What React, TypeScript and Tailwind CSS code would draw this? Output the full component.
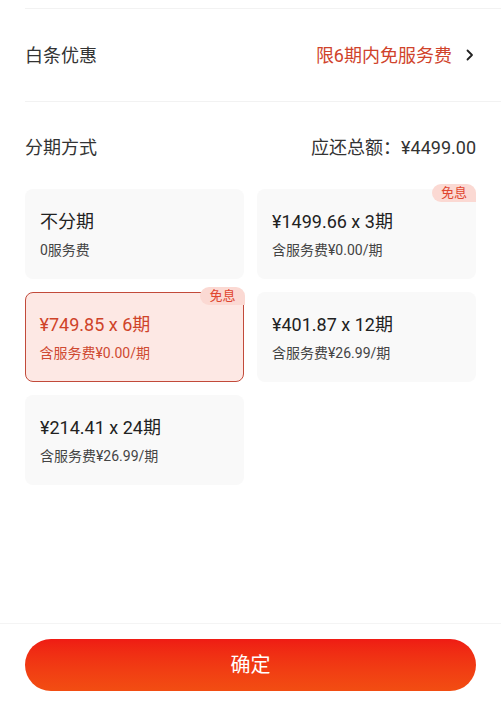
import React from 'react';

const FONT = { fontFamily: 'Roboto, "Noto Sans CJK SC", sans-serif' };

type Plan = { title: string; sub: string; free?: boolean; selected?: boolean };

const PLANS: Plan[] = [
  { title: '不分期', sub: '0服务费' },
  { title: '¥1499.66 x 3期', sub: '含服务费¥0.00/期', free: true },
  { title: '¥749.85 x 6期', sub: '含服务费¥0.00/期', free: true, selected: true },
  { title: '¥401.87 x 12期', sub: '含服务费¥26.99/期' },
  { title: '¥214.41 x 24期', sub: '含服务费¥26.99/期' },
];

const PlanCard = ({ plan }: { plan: Plan }) => (
  <div
    className={
      plan.selected
        ? 'relative h-[90px] rounded-[8px] border-[1.5px] border-[#c24a3a] bg-[#fde8e4] pl-[13.5px] pt-[19.5px]'
        : 'relative h-[90px] rounded-[8px] bg-[#f9f9f9] pl-[15px] pt-[21px]'
    }
  >
    {plan.free && (
      <div
        className={
          plan.selected
            ? 'absolute -top-[6.5px] -right-[1.5px] h-[18px] px-[9px] rounded-t-[9px] rounded-bl-[9px] bg-[#fbd9d3] text-[13px] leading-[18px] text-[#e0462f]'
            : 'absolute -top-[5px] right-0 h-[18px] px-[9px] rounded-t-[9px] rounded-bl-[9px] bg-[#fbd9d3] text-[13px] leading-[18px] text-[#e0462f]'
        }
      >
        免息
      </div>
    )}
    <div className={plan.selected ? 'text-[18px] leading-[24px] text-[#cf4329]' : 'text-[18px] leading-[24px] text-[#222]'}>
      {plan.title}
    </div>
    <div className={plan.selected ? 'mt-[6px] text-[14px] leading-[20px] text-[#cf4a32]' : 'mt-[6px] text-[14px] leading-[20px] text-[#444]'}>
      {plan.sub}
    </div>
  </div>
);

export default function App() {
  return (
    <div className="h-[707px] w-full bg-white flex flex-col" style={FONT}>
      <div className="pt-[8px]">
        <div className="ml-[25px] border-t border-[#f2f2f2]" />
        <div className="h-[92px] flex items-center justify-between pl-[25px] pr-[25px]">
          <span className="text-[18px] text-[#333]">白条优惠</span>
          <div className="flex items-center gap-[12px]">
            <span className="text-[18px] text-[#d0432b]">限6期内免服务费</span>
            <svg width="12" height="12" viewBox="0 0 12 12" fill="none">
              <path d="M3.5 1.5 L8 6 L3.5 10.5" stroke="#222" strokeWidth="1.8" strokeLinecap="round" strokeLinejoin="round" />
            </svg>
          </div>
        </div>
        <div className="ml-[25px] border-t border-[#f2f2f2]" />
      </div>

      <div className="px-[25px]">
        <div className="pt-[34px] pb-[29px] flex items-center justify-between text-[18px] leading-[24px] text-[#333]">
          <span>分期方式</span>
          <span>应还总额：¥4499.00</span>
        </div>
        <div className="grid grid-cols-2 gap-x-[13px] gap-y-[13px]">
          {PLANS.map(p => (
            <PlanCard key={p.title} plan={p} />
          ))}
        </div>
      </div>

      <div className="flex-1" />

      <div className="border-t border-[#f4f4f4] px-[25px] pt-[15px] pb-[16px]">
        <button className="w-full h-[52px] rounded-full bg-linear-to-b from-[#ef1b14] to-[#f24d12] text-white text-[20px]">
          确定
        </button>
      </div>
    </div>
  );
}
